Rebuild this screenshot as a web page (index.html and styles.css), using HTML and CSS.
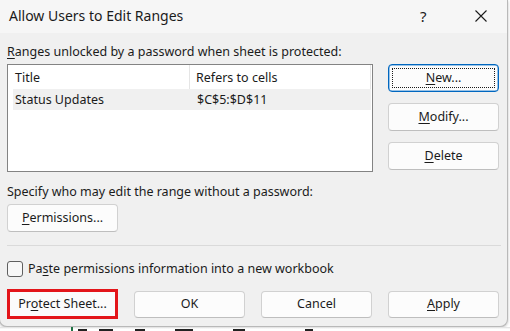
FILE: index.html
```html
<!DOCTYPE html>
<html>
<head>
<meta charset="utf-8">
<link rel="stylesheet" href="styles.css">
</head>
<body>
<div class="screen">
  <div class="dialog">
    <div class="titlebar">
      <span class="title">Allow Users to Edit Ranges</span>
      <span class="help">?</span>
      <svg class="close" width="12" height="12" viewBox="0 0 12 12"><path d="M0.5 0.5 L11.5 11.5 M11.5 0.5 L0.5 11.5" stroke="#1b1b1b" stroke-width="1.1" fill="none"/></svg>
    </div>
    <div class="content">
      <div class="label top-label"><u>R</u>anges unlocked by a password when sheet is protected:</div>
      <div class="main">
        <div class="listbox">
          <div class="row header">
            <div class="cell c1">Title</div>
            <div class="cell c2">Refers to cells</div>
          </div>
          <div class="row item">
            <div class="cell c1">Status Updates</div>
            <div class="cell c2">$C$5:$D$11</div>
          </div>
        </div>
        <div class="side">
          <div class="btn primary"><span><u>N</u>ew...</span></div>
          <div class="btn"><span><u>M</u>odify...</span></div>
          <div class="btn"><span><u>D</u>elete</span></div>
        </div>
      </div>
      <div class="label spec-label">Specify who may edit the range without a password:</div>
      <div class="btn perm"><span><u>P</u>ermissions...</span></div>
      <div class="sep"></div>
      <div class="check-row">
        <span class="checkbox"></span>
        <span class="check-label">Pa<u>s</u>te permissions information into a new workbook</span>
      </div>
      <div class="bottom">
        <div class="btn protect"><span>Pr<u>o</u>tect Sheet...</span></div>
        <div class="btn"><span>OK</span></div>
        <div class="btn"><span>Cancel</span></div>
        <div class="btn"><span><u>A</u>pply</span></div>
      </div>
    </div>
  </div>
  <div class="sheet">
    <span class="mark m1"></span><span class="mark m2"></span><span class="mark m3"></span><span class="mark m4"></span><span class="mark m5"></span><span class="mark m6"></span><span class="mark m7"></span>
  </div>
</div>
</body>
</html>
```
FILE: styles.css
```css
* { box-sizing: border-box; }
html, body { margin: 0; padding: 0; }
body {
  font-family: "Noto Sans", "Open Sans", sans-serif;
  font-size: 12.5px;
  color: #1b1b1b;
  background: #ffffff;
}
u { text-decoration: underline; text-underline-offset: 2px; text-decoration-thickness: 1px; }
.screen {
  width: 510px;
  height: 331px;
  overflow: hidden;
  background: #ffffff;
}
.dialog {
  width: 509px;
  height: 327px;
  margin-left: -1px;
  background: #f0f0f0;
  border: 1px solid #b9b9b9;
  border-top: none;
  border-radius: 0 0 8px 8px;
  box-shadow: 0 1px 3px rgba(0,0,0,0.25);
  display: flex;
  flex-direction: column;
}
.titlebar {
  height: 33px;
  flex: none;
  background: #f6f6f6;
  display: flex;
  align-items: center;
  padding-left: 9px;
}
.title {
  font-size: 14px;
  flex: 1;
  padding-bottom: 2px;
}
.help {
  font-size: 15px;
  width: 16px;
  margin-right: 39px;
  padding-bottom: 2px;
}
.close {
  margin-right: 20px;
  margin-bottom: 2px;
}
.content {
  padding-left: 7px;
  display: flex;
  flex-direction: column;
}
.label {
  height: 18px;
  line-height: 18px;
  white-space: nowrap;
}
.top-label { margin-top: 10px; }
.main {
  margin-top: 3px;
  display: flex;
  align-items: flex-start;
}
.listbox {
  width: 366px;
  height: 108px;
  background: #ffffff;
  border: 1px solid #838383;
  flex: none;
}
.row {
  display: flex;
  height: 24px;
  align-items: center;
}
.row.item {
  height: 21px;
  background: #f0f0f0;
  margin-left: 5px;
  margin-right: 1px;
}
.cell {
  white-space: nowrap;
  height: 100%;
  display: flex;
  align-items: center;
}
.header .c1 {
  width: 182px;
  padding-left: 7px;
  border-right: 1px solid #e5e5e5;
}
.header .c2 {
  flex: 1;
  padding-left: 6px;
  margin-right: 1px;
  border-right: 1px solid #e5e5e5;
}
.item .c1 {
  width: 177px;
  padding-left: 2px;
}
.item .c2 {
  flex: 1;
  padding-left: 7px;
}
.side {
  margin-left: 15px;
  display: flex;
  flex-direction: column;
  gap: 11px;
}
.btn {
  width: 111px;
  height: 28px;
  background: #fcfcfc;
  border: 1px solid #d1d1d1;
  border-bottom-color: #bebebe;
  border-radius: 4px;
  display: flex;
  align-items: center;
  justify-content: center;
  white-space: nowrap;
  position: relative;
  flex: none;
}
.btn span { padding-bottom: 1px; }
.btn.primary {
  border: 1px solid #0067c0;
  box-shadow: inset 0 0 0 0.5px #3a8ad0;
}
.btn.primary::after {
  content: "";
  position: absolute;
  left: 3px; right: 3px; top: 3px; bottom: 3px;
  border: 1px dotted #1b1b1b;
}
.spec-label { margin-top: 11px; }
.perm { margin-top: 3px; }
.sep {
  margin-top: 13px;
  width: 494px;
  height: 1px;
  background: #dadada;
}
.check-row {
  margin-top: 15px;
  display: flex;
  align-items: center;
  height: 15px;
}
.checkbox {
  width: 16px;
  height: 16px;
  border: 1px solid #5f5f5f;
  border-radius: 3px;
  background: #f7f7f7;
  flex: none;
}
.check-label {
  margin-left: 5px;
  white-space: nowrap;
  padding-bottom: 1px;
}
.bottom {
  margin-top: 13px;
  display: flex;
  align-items: center;
  gap: 16px;
  height: 30px;
}
.bottom .btn { height: 27px; }
.btn.protect {
  height: 30px !important;
  border: 3px solid #e3151a;
  border-radius: 0;
  background: #fbfbfb;
}
.sheet {
  height: 4px;
  display: flex;
  align-items: flex-end;
  background: linear-gradient(#dcdcdc, #ffffff 2px);
}
.mark {
  display: block;
  height: 2px;
  background: #222;
  flex: none;
}
.m1 { width: 2px; margin-left: 71px; background: #217346; height: 4px; }
.m2 { width: 9px; margin-left: 5px; }
.m3 { width: 14px; margin-left: 12px; }
.m4 { width: 10px; margin-left: 22px; }
.m5 { width: 18px; margin-left: 30px; }
.m6 { width: 12px; margin-left: 40px; }
.m7 { width: 8px; margin-left: 60px; }
```
